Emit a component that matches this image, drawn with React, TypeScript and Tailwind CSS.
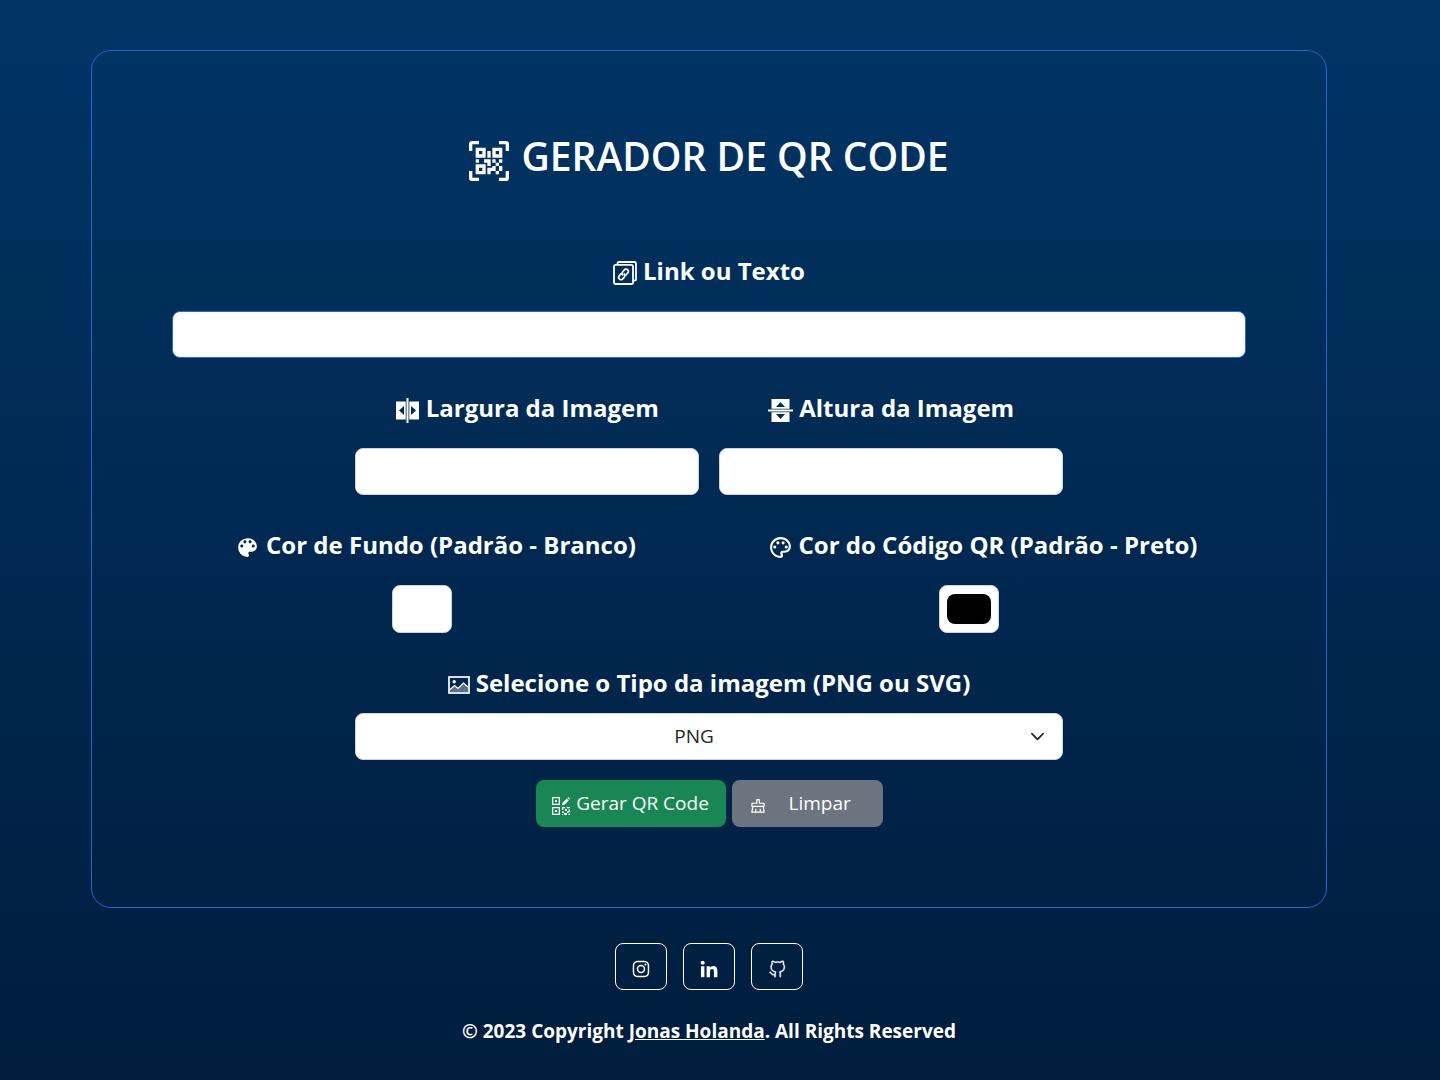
import React, { useState } from 'react'
import { MdColorLens, MdOutlinePalette } from 'react-icons/md'
import { AiOutlineClear } from 'react-icons/ai'
import { VscGithubAlt } from 'react-icons/vsc'
import { BiLogoInstagram } from 'react-icons/bi'
import { GrLinkedinOption } from 'react-icons/gr'

function QrScanIcon() {
  return (
    <svg viewBox="0 0 24 24" className="mt-2.5 size-10 shrink-0" fill="currentColor" aria-hidden="true">
      <path d="M4,4H10V10H4V4M20,4V10H14V4H20M14,15H16V13H14V11H16V13H18V11H20V13H18V15H20V18H18V20H16V18H13V20H11V16H14V15M16,15V18H18V15H16M4,20V14H10V20H4M6,6V8H8V6H6M16,6V8H18V6H16M6,16V18H8V16H6M4,11H6V13H4V11M9,11H13V15H11V13H9V11M11,6H13V10H11V6M2,2V6H0V2A2,2 0 0,1 2,0H6V2H2M22,0A2,2 0 0,1 24,2V6H22V2H18V0H22M2,18V22H6V24H2A2,2 0 0,1 0,22V18H2M22,22V18H24V22A2,2 0 0,1 22,24H18V22H22Z" />
    </svg>
  )
}

function LinkCardsIcon() {
  return (
    <svg viewBox="0 0 24 24" className="mt-1 size-6" fill="none" stroke="currentColor" strokeWidth="1.8" aria-hidden="true">
      <rect x="1" y="3.8" width="19" height="19.2" rx="1.6" />
      <path d="M4.500 3.500V2.600Q4.500 1 6 1H21.400Q23 1 23 2.600V18Q23 19.600 21.400 19.600H20" />
      <g transform="translate(10.500 13.400) rotate(-50)" strokeWidth="1.7" strokeLinecap="round">
        <path d="M-.8-2.300H-3.900a2.300 2.300 0 0 0 0 4.600H-1.300a2.300 2.300 0 0 0 2.200-2" />
        <path d="M.8 2.300H3.900a2.300 2.300 0 0 0 0-4.600H1.300a2.300 2.300 0 0 0-2.200 2" />
      </g>
    </svg>
  )
}

function SplitIcon({ vertical = false }: { vertical?: boolean }) {
  return (
    <svg viewBox="0 0 25 25" className={vertical ? 'mt-1 size-[25px] rotate-90' : 'mt-1 size-[25px]'} fill="currentColor" aria-hidden="true">
      <path d="M11.500 0h2v25h-2z" />
      <path fillRule="evenodd" d="M1 3.500h9.700v18H1zM9 8L4 12.500 9 17z" />
      <path fillRule="evenodd" d="M14.300 3.500H24v18h-9.700zM16 8v9l5-4.500z" />
    </svg>
  )
}

function PictureIcon() {
  return (
    <svg viewBox="0 0 22 18" className="mt-1 h-[18px] w-[22px]" fill="none" stroke="currentColor" aria-hidden="true">
      <path d="M2 13.500l4.500-4 3.500 3 5.500-5.500L20 11v5H2z" fill="currentColor" fillOpacity=".35" stroke="none" />
      <rect x="1" y="1" width="20" height="16" strokeWidth="1.700" />
      <path d="M2 13.500l4.500-4 3.500 3 5.500-5.500L20 11" strokeWidth="1.200" />
      <circle cx="6.200" cy="5.800" r="1.700" fill="currentColor" stroke="none" />
    </svg>
  )
}

function QrEditIcon() {
  return (
    <svg viewBox="0 0 18 18" className="mt-1 size-[18px]" fill="currentColor" aria-hidden="true">
      <path fillRule="evenodd" d="M0 0h8v8H0zM1.300 1.300v5.400h5.400V1.300zM3 3h2v2H3zM0 10h8v8H0zM1.300 11.300v5.400h5.400v-5.400zM3 13h2v2H3z" />
      <path d="M10 8.300l.6-2.500 4.200-4.200 1.900 1.900-4.200 4.200zM15.500.900l.9-.9L18 1.800l-.9.900z" />
      <path d="M10 10h3v1.300h-1.700V13H10zM14.500 10H18v1.300h-3.500zM13 12h2v2h-2zM16.500 12.500H18V15h-1.500zM10 14.500h2V16h-2zM12 16h3v2h-3zM15 14.500h1.500V16H15zM16.500 16.500H18V18h-1.500zM10 17h1v1h-1z" />
    </svg>
  )
}

const label = 'flex h-9 items-center justify-center gap-1.5 pb-0.5 whitespace-nowrap text-2xl font-bold'
const field = 'h-[47px] w-full rounded-lg border bg-white px-3 text-xl text-gray-900 outline-none'
const swatch =
  'mt-[21px] mr-7 h-12 w-[60px] cursor-pointer appearance-none rounded-lg border border-[#ced4da] bg-white px-[7px] py-2 [&::-webkit-color-swatch-wrapper]:p-0 [&::-webkit-color-swatch]:rounded-lg [&::-webkit-color-swatch]:border-0'
const social = 'flex h-[47px] w-[52px] items-center justify-center rounded-lg border border-white pt-1 hover:bg-white/10'

export default function App() {
  const [background, setBackground] = useState('#ffffff')
  const [foreground, setForeground] = useState('#000000')

  return (
    <div className="min-h-screen bg-linear-to-b from-[#003566] to-[#001d3d] pt-[50px] pr-[22px] pb-8 font-['Open_Sans','Noto_Sans',sans-serif] text-white">
      <main className="mx-auto w-11/12 max-w-[1236px] rounded-[20px] border border-[#1f66d6] px-20 pt-[78px] pb-20">
        <h1 className="flex h-[54px] items-center justify-center gap-3 text-[39px] font-semibold">
          <QrScanIcon />
          GERADOR DE QR CODE
        </h1>

        <form onSubmit={(e) => e.preventDefault()} className="mt-[71px]">
          <label htmlFor="content" className={label}>
            <LinkCardsIcon />
            Link ou Texto
          </label>
          <input id="content" type="text" className={`${field} mt-[21px] border-[#1d6fd0]`} />

          <div className="mx-auto mt-[33px] grid w-[66%] grid-cols-2 gap-5">
            <div>
              <label htmlFor="width" className={label}>
                <SplitIcon />
                Largura da Imagem
              </label>
              <input id="width" type="text" className={`${field} mt-[21px] border-[#ced4da]`} />
            </div>
            <div>
              <label htmlFor="height" className={label}>
                <SplitIcon vertical />
                Altura da Imagem
              </label>
              <input id="height" type="text" className={`${field} mt-[21px] border-[#ced4da]`} />
            </div>
          </div>

          <div className="-mx-2.5 mt-[33px] grid grid-cols-2">
            <div className="flex flex-col items-center">
              <label htmlFor="background" className={label}>
                <MdColorLens className="mt-1 size-[25px]" />
                Cor de Fundo (Padrão - Branco)
              </label>
              <input id="background" type="color" value={background} onChange={(e) => setBackground(e.target.value)} className={swatch} />
            </div>
            <div className="flex flex-col items-center">
              <label htmlFor="foreground" className={label}>
                <MdOutlinePalette className="mt-1 size-[25px]" />
                Cor do Código QR (Padrão - Preto)
              </label>
              <input id="foreground" type="color" value={foreground} onChange={(e) => setForeground(e.target.value)} className={swatch} />
            </div>
          </div>

          <div className="mx-auto mt-[33px] w-[66%]">
            <label htmlFor="format" className={label}>
              <PictureIcon />
              Selecione o Tipo da imagem (PNG ou SVG)
            </label>
            <div className="relative mt-[11px]">
              <select id="format" className="h-[47px] w-full appearance-none rounded-lg border border-[#ced4da] bg-white pr-[42px] pl-3 text-center text-[19px] text-[#212529] outline-none">
                <option>PNG</option>
                <option>SVG</option>
              </select>
              <svg viewBox="0 0 16 16" className="pointer-events-none absolute top-4 right-[18px] size-[15px]" fill="none" stroke="#212529" strokeWidth="1.8" strokeLinecap="round" strokeLinejoin="round" aria-hidden="true">
                <path d="m2 5 6 6 6-6" />
              </svg>
            </div>
          </div>

          <div className="mt-5 flex justify-center gap-1.5 text-[19px]">
            <button type="submit" className="flex h-[47px] w-[190px] items-center justify-center gap-1.5 rounded-lg bg-[#198754] whitespace-nowrap">
              <QrEditIcon />
              Gerar QR Code
            </button>
            <button type="reset" className="flex h-[47px] w-[151px] items-center gap-[22px] rounded-lg bg-[#6c757d] pl-[17px]">
              <AiOutlineClear className="mt-1 size-[18px]" />
              Limpar
            </button>
          </div>
        </form>
      </main>

      <footer className="mt-[35px] flex flex-col items-center">
        <div className="flex gap-4">
          <a href="#instagram" aria-label="Instagram" className={social}>
            <BiLogoInstagram className="size-[22px]" />
          </a>
          <a href="#linkedin" aria-label="LinkedIn" className={social}>
            <GrLinkedinOption className="size-5" />
          </a>
          <a href="#github" aria-label="GitHub" className={social}>
            <VscGithubAlt className="size-[18px] stroke-current stroke-[0.6]" />
          </a>
        </div>
        <p className="mt-[27px] text-[19px] leading-7 font-bold">
          © 2023 Copyright{' '}
          <a href="#jonas" className="underline">
            Jonas Holanda
          </a>
          . All Rights Reserved
        </p>
      </footer>
    </div>
  )
}
